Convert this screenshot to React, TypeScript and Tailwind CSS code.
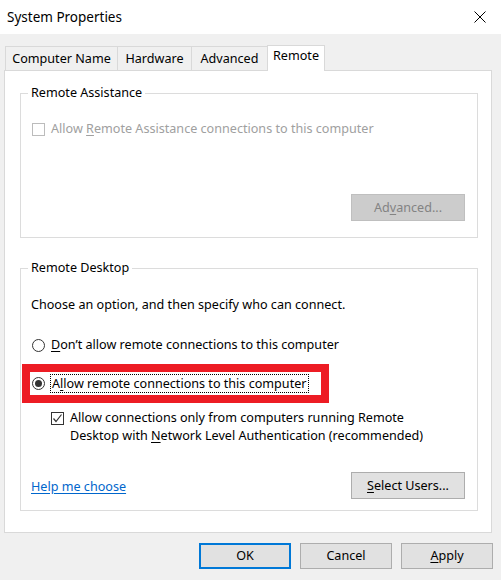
import React from "react";

// accelerator letter underline, as the dialog shows it
function U({ children }: { children: React.ReactNode }) {
  return <span className="underline underline-offset-2">{children}</span>;
}

function Tab({ label, active }: { label: string; active?: boolean }) {
  if (active) {
    return (
      <div className="relative z-10 -mb-px h-[26px] w-[58px] border border-b-0 border-[#d9d9d9] bg-white flex items-start justify-center pt-[2px]">
        {label}
      </div>
    );
  }
  return <div className="-mr-px h-[24px] border border-b-0 border-[#d9d9d9] bg-[#f0f0f0] flex items-center justify-center">{label}</div>;
}

function Radio({ checked }: { checked?: boolean }) {
  return (
    <span className="w-[13px] h-[13px] rounded-full border border-[#333333] bg-white flex items-center justify-center shrink-0">
      {checked && <span className="w-[7px] h-[7px] rounded-full bg-[#333333]" />}
    </span>
  );
}

function Check({ checked, disabled }: { checked?: boolean; disabled?: boolean }) {
  return (
    <span
      className={
        disabled
          ? "w-[13px] h-[13px] border border-[#bcbcbc] bg-white shrink-0"
          : "w-[13px] h-[13px] border border-[#333333] bg-white shrink-0 flex items-center justify-center"
      }
    >
      {checked && (
        <svg width="11" height="11" viewBox="0 0 11 11">
          <polyline points="1.5,5.5 4,8.5 9.5,1.5" fill="none" stroke="#333333" strokeWidth="1.2" />
        </svg>
      )}
    </span>
  );
}

function GroupLabel({ children }: { children: React.ReactNode }) {
  return <div className="-mt-[9px] ml-[7px] w-fit bg-white px-[3px] leading-[16px]">{children}</div>;
}

export default function App() {
  return (
    <div className="w-[501px] h-[580px] bg-[#f0f0f0] flex flex-col text-[12.6px] text-black leading-[16px] [font-family:Segoe_UI,Noto_Sans,sans-serif]">
      {/* title bar */}
      <div className="h-[34px] bg-white flex items-center justify-between pl-[7px] pr-[15px]">
        <span className="text-[13.5px]">System Properties</span>
        <svg width="12" height="12" viewBox="0 0 12 12">
          <path d="M0.5 0.5 L11.5 11.5 M11.5 0.5 L0.5 11.5" stroke="#000" strokeWidth="1" />
        </svg>
      </div>

      <div className="pl-[4px] pt-[11px]">
        <div className="flex items-end h-[25px] pl-[1px]">
          <div className="w-[112px]"><Tab label="Computer Name" /></div>
          <div className="w-[74px]"><Tab label="Hardware" /></div>
          <div className="w-[76px]"><Tab label="Advanced" /></div>
          <Tab label="Remote" active />
        </div>

        <div className="w-[488px] h-[463px] border border-[#d9d9d9] bg-white pl-[15px] pt-[22px]">
          {/* Remote Assistance */}
          <div className="w-[458px] h-[145px] border border-[#dcdcdc] flex flex-col">
            <GroupLabel>Remote Assistance</GroupLabel>
            <div className="mt-[20px] pl-[11px] flex items-center gap-[6px] text-[#a0a0a0]">
              <Check disabled />
              <span>
                Allow <U>R</U>emote Assistance connections to this computer
              </span>
            </div>
            <button className="mt-[57px] mr-[12px] self-end w-[114px] h-[27px] bg-[#cccccc] border border-[#bfbfbf] text-[#838383]">
              Ad<U>v</U>anced...
            </button>
          </div>

          {/* Remote Desktop */}
          <div className="mt-[30px] w-[458px] h-[243px] border border-[#dcdcdc] flex flex-col">
            <GroupLabel>Remote Desktop</GroupLabel>
            <div className="mt-[21px] pl-[10px]">Choose an option, and then specify who can connect.</div>
            <div className="mt-[24px] pl-[11px] flex items-center gap-[6px]">
              <Radio />
              <span>
                <U>D</U>on’t allow remote connections to this computer
              </span>
            </div>
            <div className="mt-[11px] ml-[1px] w-[307px] h-[39px] border-[8px] border-[#ed1c24] flex items-center pl-[2px] gap-[5px]">
              <Radio checked />
              <span className="border border-dotted border-black px-px leading-[17px]">
                A<U>l</U>low remote connections to this computer
              </span>
            </div>
            <div className="mt-[6px] pl-[30px] flex items-start gap-[6px] leading-[18px]">
              <span className="mt-[3px]">
                <Check checked />
              </span>
              <span>
                Allow connections only from computers running Remote
                <br />
                Desktop with <U>N</U>etwork Level Authentication (recommended)
              </span>
            </div>
            <div className="mt-[27px] pl-[10px] pr-[12px] flex items-center justify-between">
              <a className="mt-[3px] text-[#0066cc] underline underline-offset-2 cursor-pointer">Help me choose</a>
              <button className="w-[114px] h-[27px] bg-[#e1e1e1] border border-[#adadad]">
                <U>S</U>elect Users...
              </button>
            </div>
          </div>
        </div>
      </div>

      {/* dialog buttons */}
      <div className="mt-[10px] pr-[8px] flex justify-end gap-[9px]">
        <button className="w-[92px] h-[26px] bg-[#e1e1e1] border-2 border-[#0078d7]">OK</button>
        <button className="w-[92px] h-[26px] bg-[#e1e1e1] border border-[#adadad]">Cancel</button>
        <button className="w-[92px] h-[26px] bg-[#e1e1e1] border border-[#adadad]">
          <U>A</U>pply
        </button>
      </div>
    </div>
  );
}
